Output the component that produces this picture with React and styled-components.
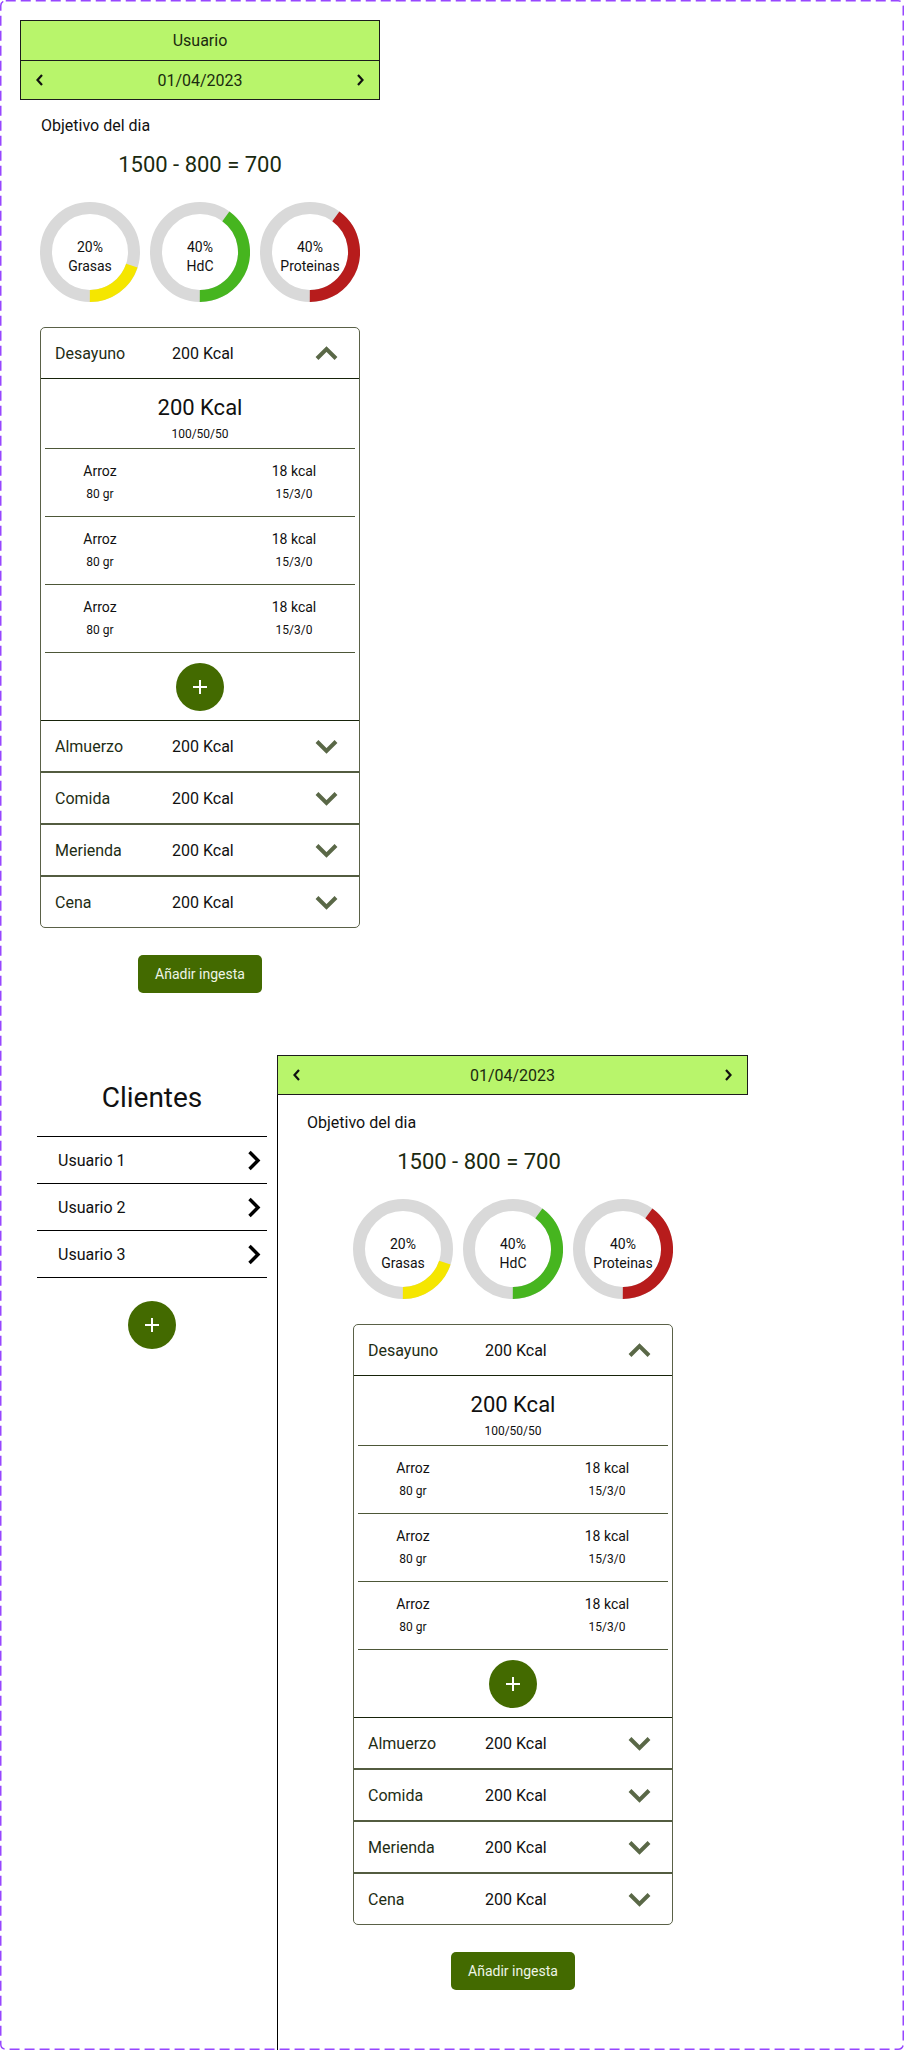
import styled, { createGlobalStyle } from "styled-components";

const GlobalStyle = createGlobalStyle`
  * { box-sizing: border-box; }
  body {
    margin: 0;
    background: #fff;
    font-family: Roboto, "Liberation Sans", Arial, sans-serif;
    color: #111;
  }
`;

const macros = [
  { pct: 0.2, label: "Grasas", color: "#f5e600" },
  { pct: 0.4, label: "HdC", color: "#46b51f" },
  { pct: 0.4, label: "Proteinas", color: "#b71c1c" },
];

const meals = ["Desayuno", "Almuerzo", "Comida", "Merienda", "Cena"];
const foods = [
  { name: "Arroz", qty: "80 gr", kcal: "18 kcal", macros: "15/3/0" },
  { name: "Arroz", qty: "80 gr", kcal: "18 kcal", macros: "15/3/0" },
  { name: "Arroz", qty: "80 gr", kcal: "18 kcal", macros: "15/3/0" },
];
const clients = ["Usuario 1", "Usuario 2", "Usuario 3"];

function SmallChevron({ dir }) {
  const pts = dir === "left" ? "6,1 1.5,6 6,11" : "1,1 5.5,6 1,11";
  return (
    <svg width="7" height="12" viewBox="0 0 7 12">
      <polyline points={pts} fill="none" stroke="#111" strokeWidth="2.2" />
    </svg>
  );
}

function MealChevron({ up }) {
  const pts = up ? "2,12.5 11.5,3 21,12.5" : "2,2.5 11.5,12 21,2.5";
  return (
    <svg width="23" height="15" viewBox="0 0 23 15">
      <polyline points={pts} fill="none" stroke="#5a6847" strokeWidth="4" />
    </svg>
  );
}

function RowChevron() {
  return (
    <svg width="14" height="21" viewBox="0 0 14 21">
      <polyline points="2.5,2 11,10.5 2.5,19" fill="none" stroke="#000" strokeWidth="3.4" />
    </svg>
  );
}

function PlusButton() {
  return (
    <RoundAdd>
      <svg width="14" height="14" viewBox="0 0 14 14">
        <path d="M7 0v14M0 7h14" stroke="#fff" strokeWidth="2" />
      </svg>
    </RoundAdd>
  );
}

function Donut({ pct, color, label }) {
  const r = 44;
  const c = 2 * Math.PI * r;
  return (
    <Ring>
      <svg width="100" height="100" viewBox="0 0 100 100">
        <circle cx="50" cy="50" r={r} fill="none" stroke="#d9d9d9" strokeWidth="12" />
        <circle
          cx="50"
          cy="50"
          r={r}
          fill="none"
          stroke={color}
          strokeWidth="12"
          strokeDasharray={`${c * pct} ${c}`}
          transform={`rotate(${90 - pct * 360} 50 50)`}
        />
      </svg>
      <RingLabel>
        <span>{Math.round(pct * 100)}%</span>
        <span>{label}</span>
      </RingLabel>
    </Ring>
  );
}

function DateRow({ framed }) {
  return (
    <DateBar $framed={framed}>
      <SmallChevron dir="left" />
      <span>01/04/2023</span>
      <SmallChevron dir="right" />
    </DateBar>
  );
}

function MealCard() {
  return (
    <Card>
      {meals.map((meal, i) => (
        <Meal key={meal} $first={i === 0} $afterOpen={i === 1}>
          <MealHead>
            <MealName>{meal}</MealName>
            <MealKcal>200 Kcal</MealKcal>
            <MealChevron up={i === 0} />
          </MealHead>
          {i === 0 && (
            <MealBody>
              <Summary>
                <BigKcal>200 Kcal</BigKcal>
                <SmallText>100/50/50</SmallText>
              </Summary>
              {foods.map((f, j) => (
                <FoodRow key={j}>
                  <FoodCol>
                    <FoodMain>{f.name}</FoodMain>
                    <SmallText>{f.qty}</SmallText>
                  </FoodCol>
                  <FoodCol>
                    <FoodMain>{f.kcal}</FoodMain>
                    <SmallText>{f.macros}</SmallText>
                  </FoodCol>
                </FoodRow>
              ))}
              <AddArea>
                <PlusButton />
              </AddArea>
            </MealBody>
          )}
        </Meal>
      ))}
    </Card>
  );
}

function DaySummary({ inset, goalShift }) {
  return (
    <>
      <GoalLabel $inset={inset}>Objetivo del dia</GoalLabel>
      <Goal $shift={goalShift}>1500 - 800 = 700</Goal>
      <Donuts>
        {macros.map((m) => (
          <Donut key={m.label} {...m} />
        ))}
      </Donuts>
      <MealCard />
      <AddIntake>Añadir ingesta</AddIntake>
    </>
  );
}

export default function App() {
  return (
    <>
      <GlobalStyle />
      <Frame>
        <UserColumn>
          <HeaderBox>
            <TitleRow>Usuario</TitleRow>
            <DateRow />
          </HeaderBox>
          <DaySummary inset={21} goalShift={0} />
        </UserColumn>

        <CoachSection>
          <ClientColumn>
            <ClientsTitle>Clientes</ClientsTitle>
            <ClientList>
              {clients.map((c) => (
                <ClientRow key={c}>
                  <span>{c}</span>
                  <RowChevron />
                </ClientRow>
              ))}
            </ClientList>
            <ClientAdd>
              <PlusButton />
            </ClientAdd>
          </ClientColumn>
          <Panel>
            <DateRow framed />
            <PanelBody>
              <DaySummary inset={29} goalShift={68} />
            </PanelBody>
          </Panel>
        </CoachSection>

        <DashedFrame width="904" height="2050" viewBox="0 0 904 2050">
          <rect
            x="0.75"
            y="0.75"
            width="902.5"
            height="2048.5"
            rx="5"
            fill="none"
            stroke="#9747ff"
            strokeWidth="1.5"
            strokeDasharray="10 5"
          />
        </DashedFrame>
      </Frame>
    </>
  );
}

const Frame = styled.div`
  position: relative;
  width: 904px;
  height: 2050px;
  display: flex;
  flex-direction: column;
  padding-top: 20px;
  overflow: hidden;
`;

const DashedFrame = styled.svg`
  position: absolute;
  top: 0;
  left: 0;
  pointer-events: none;
`;

const UserColumn = styled.div`
  width: 360px;
  margin-left: 20px;
  display: flex;
  flex-direction: column;
`;

const HeaderBox = styled.div`
  border: 1px solid #1c1c1c;
  background: #b8f56b;
`;

const TitleRow = styled.div`
  height: 40px;
  border-bottom: 1px solid #1c1c1c;
  display: flex;
  align-items: center;
  justify-content: center;
  font-size: 16px;
  color: #1b2b0f;
`;

const DateBar = styled.div`
  height: ${(p) => (p.$framed ? "40px" : "38px")};
  display: flex;
  align-items: center;
  justify-content: space-between;
  padding: 0 15px;
  background: #b8f56b;
  border: ${(p) => (p.$framed ? "1px solid #1c1c1c" : "none")};
  font-size: 16px;
  color: #1b2b0f;
`;

const GoalLabel = styled.div`
  margin-top: 16px;
  padding-left: ${(p) => p.$inset}px;
  font-size: 16px;
  line-height: 19px;
  color: #111;
`;

const Goal = styled.div`
  margin-top: 17px;
  padding-right: ${(p) => p.$shift}px;
  text-align: center;
  font-size: 22px;
  line-height: 26px;
  color: #1a2a10;
`;

const Donuts = styled.div`
  margin-top: 24px;
  display: flex;
  justify-content: center;
  gap: 10px;
`;

const Ring = styled.div`
  position: relative;
  width: 100px;
  height: 100px;
  svg {
    display: block;
  }
`;

const RingLabel = styled.div`
  position: absolute;
  inset: 0;
  padding-top: 10px;
  display: flex;
  flex-direction: column;
  align-items: center;
  justify-content: center;
  font-size: 14px;
  line-height: 19px;
  color: #111;
`;

const Card = styled.div`
  margin: 25px auto 0;
  width: 320px;
  border: 1px solid #5a6148;
  border-radius: 5px;
  overflow: hidden;
`;

const Meal = styled.div`
  border-top: ${(p) =>
    p.$first ? "none" : p.$afterOpen ? "1px solid #17230a" : "2px solid #535c40"};
`;

const MealHead = styled.div`
  height: 50px;
  display: flex;
  align-items: center;
  padding: 0 21px 0 14px;
  font-size: 16px;
  svg {
    margin-left: auto;
  }
`;

const MealName = styled.span`
  width: 117px;
  color: #1e2d14;
`;

const MealKcal = styled.span`
  color: #111;
`;

const MealBody = styled.div`
  border-top: 1px solid #17230a;
  padding: 0 4px;
`;

const Summary = styled.div`
  height: 69px;
  padding-top: 16px;
  display: flex;
  flex-direction: column;
  align-items: center;
`;

const BigKcal = styled.div`
  font-size: 22px;
  line-height: 26px;
  color: #111;
`;

const SmallText = styled.div`
  margin-top: 6px;
  font-size: 12px;
  line-height: 14px;
  color: #111;
`;

const FoodRow = styled.div`
  height: 68px;
  border-top: 1px solid #4d5738;
  display: flex;
  justify-content: space-between;
  padding: 14px 21px 0 15px;
`;

const FoodCol = styled.div`
  width: 80px;
  display: flex;
  flex-direction: column;
  align-items: center;
  ${SmallText} {
    margin-top: 8px;
  }
`;

const FoodMain = styled.div`
  font-size: 14px;
  line-height: 16px;
  color: #111;
`;

const AddArea = styled.div`
  height: 68px;
  border-top: 1px solid #4d5738;
  display: flex;
  align-items: center;
  justify-content: center;
`;

const RoundAdd = styled.div`
  width: 48px;
  height: 48px;
  border-radius: 50%;
  background: #436a00;
  display: flex;
  align-items: center;
  justify-content: center;
`;

const AddIntake = styled.button`
  margin: 27px auto 0;
  width: 124px;
  height: 38px;
  border: none;
  border-radius: 5px;
  background: #436a00;
  color: #eef5e6;
  font-family: inherit;
  font-size: 14px;
  padding: 0;
`;

const CoachSection = styled.div`
  flex: 1;
  margin-top: 62px;
  display: flex;
  align-items: stretch;
`;

const ClientColumn = styled.div`
  width: 230px;
  margin-left: 37px;
  padding-top: 26px;
  display: flex;
  flex-direction: column;
`;

const ClientsTitle = styled.div`
  text-align: center;
  font-size: 28px;
  line-height: 33px;
  color: #111;
`;

const ClientList = styled.div`
  margin-top: 22px;
  border-top: 1px solid #000;
`;

const ClientRow = styled.div`
  height: 47px;
  border-bottom: 1px solid #000;
  display: flex;
  align-items: center;
  justify-content: space-between;
  padding: 0 6px 0 21px;
  font-size: 16px;
  color: #111;
`;

const ClientAdd = styled.div`
  margin-top: 23px;
  display: flex;
  justify-content: center;
`;

const Panel = styled.div`
  width: 471px;
  margin-left: 10px;
  display: flex;
  flex-direction: column;
`;

const PanelBody = styled.div`
  flex: 1;
  padding-top: 2px;
  border-left: 1px solid #000;
  display: flex;
  flex-direction: column;
`;
